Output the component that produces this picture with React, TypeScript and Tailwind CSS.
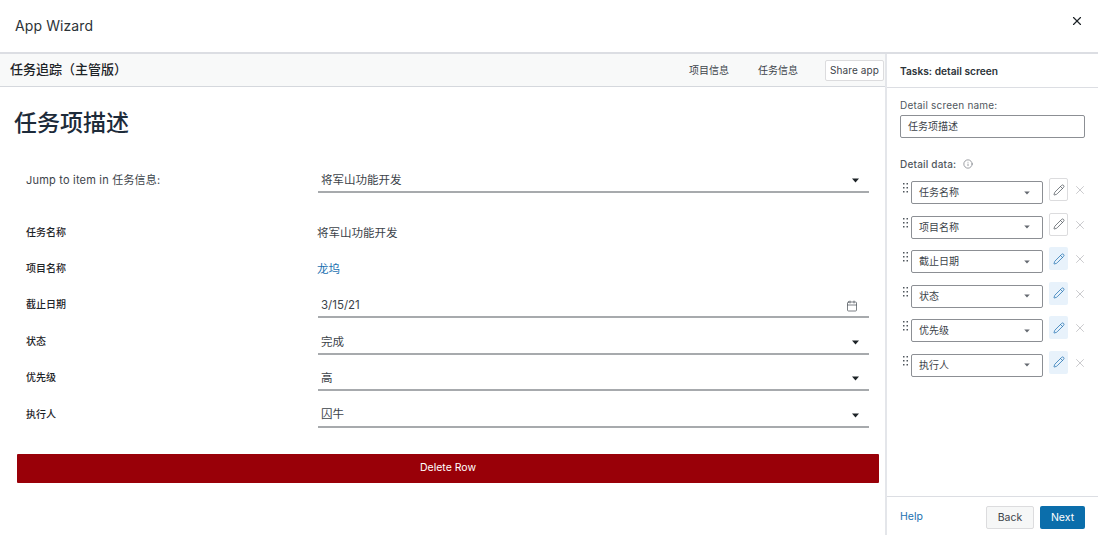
import { Pencil, X, Info, Calendar } from 'lucide-react'

const font = '"Inter", "Noto Sans CJK SC", sans-serif'

const fields = [
  { label: '任务名称', kind: 'text', value: '将军山功能开发' },
  { label: '项目名称', kind: 'link', value: '龙坞' },
  { label: '截止日期', kind: 'date', value: '3/15/21' },
  { label: '状态', kind: 'select', value: '完成' },
  { label: '优先级', kind: 'select', value: '高' },
  { label: '执行人', kind: 'select', value: '囚牛' },
]

const detailRows = [
  { name: '任务名称', active: false },
  { name: '项目名称', active: false },
  { name: '截止日期', active: true },
  { name: '状态', active: true },
  { name: '优先级', active: true },
  { name: '执行人', active: true },
]

function Caret(props: { className?: string; small?: boolean }) {
  return (
    <svg width={props.small ? 6 : 7} height={props.small ? 4 : 5} viewBox="0 0 7 5" className={props.className}>
      <path d="M0 0.5h7L3.5 4.5z" fill="currentColor" />
    </svg>
  )
}

function Grip() {
  return (
    <svg width="5" height="10" viewBox="0 0 5 10" className="text-[#50575e] mt-[5px] ml-[3px]">
      <g fill="currentColor">
        <rect x="0" y="0" width="1.5" height="1.5" />
        <rect x="3.5" y="0" width="1.5" height="1.5" />
        <rect x="0" y="4" width="1.5" height="1.5" />
        <rect x="3.5" y="4" width="1.5" height="1.5" />
        <rect x="0" y="8" width="1.5" height="1.5" />
        <rect x="3.5" y="8" width="1.5" height="1.5" />
      </g>
    </svg>
  )
}

function FlatField(props: { value: string; date?: boolean }) {
  return (
    <div className="w-[551px] h-[25px] border-b-2 border-[#a7aaad] flex items-center justify-between pt-[2px] pl-[3px] pr-[10px] text-[11.5px] text-[#3c434a]">
      <span>{props.value}</span>
      {props.date ? (
        <Calendar size={12} strokeWidth={1.5} className="text-[#50575e] mr-[1px]" />
      ) : (
        <Caret className="text-[#1d2327]" />
      )}
    </div>
  )
}

function FieldRow(props: { label: string; kind: string; value: string }) {
  return (
    <div className="h-[36.4px] flex">
      <div className="w-[292px] pt-[4px] text-[10px] font-medium text-[#1d2327]">{props.label}</div>
      <div className="flex-1">
        {props.kind === 'text' && <div className="-ml-[1px] pt-[4px] text-[11.5px] text-[#3c434a]">{props.value}</div>}
        {props.kind === 'link' && <div className="-ml-[1px] pt-[4px] text-[11.5px] text-[#2271b1]">{props.value}</div>}
        {props.kind === 'date' && <FlatField value={props.value} date />}
        {props.kind === 'select' && <FlatField value={props.value} />}
      </div>
    </div>
  )
}

function DetailRow(props: { name: string; active: boolean }) {
  return (
    <div className="h-[34.5px] flex items-start">
      <div className="w-[11px] shrink-0"><Grip /></div>
      <div className="w-[132px] h-[23px] mt-[3px] border border-[#8c8f94] rounded-[2px] flex items-center justify-between pl-[7px] pr-[12px] text-[10px] text-[#3c434a]">
        <span>{props.name}</span>
        <Caret small className="text-[#646970]" />
      </div>
      <button
        className={
          props.active
            ? 'ml-[6px] w-[19px] h-[23px] rounded-[2px] bg-[#e8f2fb] flex items-center justify-center text-[#2271b1]'
            : 'ml-[6px] w-[19px] h-[23px] rounded-[2px] border border-[#dcdcde] bg-white flex items-center justify-center text-[#50575e]'
        }
      >
        <Pencil size={12} strokeWidth={1.5} />
      </button>
      <X size={14} strokeWidth={1.5} className="ml-[5px] mt-[5px] text-[#c3c4c7]" />
    </div>
  )
}

export default function App() {
  return (
    <div className="w-[1098px] h-[535px] bg-white flex flex-col overflow-hidden" style={{ fontFamily: font }}>
      {/* Wizard title */}
      <div className="h-[54px] shrink-0 border-b-2 border-[#dcdee3] flex items-start justify-between pl-[15px] pr-[14px]">
        <div className="pt-[16px] text-[14px] leading-[20px] tracking-[0.1px] text-[#2c3338]">App Wizard</div>
        <X size={14} strokeWidth={2} className="mt-[14px] text-[#1d2327]" />
      </div>

      <div className="flex-1 flex min-h-0">
        {/* Preview area */}
        <div className="w-[885px] shrink-0 flex flex-col">
          <div className="h-[33px] shrink-0 bg-[#f8f9f9] border-b border-[#d5d8dd] flex items-center justify-between pl-[10px]">
            <div className="text-[13px] font-medium text-[#1d2327]">任务追踪（主管版）</div>
            <div className="flex items-center text-[10px] text-[#3c434a]">
              <span className="mr-[29px]">项目信息</span>
              <span className="mr-[27px]">任务信息</span>
              <button className="w-[59px] h-[21px] mr-[1px] border border-[#dcdcde] bg-white rounded-[2px] text-[10px] text-[#3c434a] tracking-[0.1px] whitespace-nowrap">
                Share app
              </button>
            </div>
          </div>

          <div className="pl-[14px] pt-[21px] text-[23px] leading-[30px] font-medium text-[#1d2b3a]">任务项描述</div>

          <div className="flex h-[25px] mt-[30px] pl-[26px] items-center">
            <div className="w-[292px] text-[11px] tracking-[0.2px] text-[#3c434a]">Jump to item in 任务信息:</div>
            <FlatField value="将军山功能开发" />
          </div>

          <div className="pl-[26px] mt-[27.6px]">
            {fields.map((f) => (
              <FieldRow key={f.label} label={f.label} kind={f.kind} value={f.value} />
            ))}
          </div>

          <div className="px-[17px] pr-[6px] mt-[14.4px]">
            <button className="w-full h-[29px] bg-[#990008] rounded-[1px] text-[10.5px] text-white">Delete Row</button>
          </div>
        </div>

        {/* Settings sidebar */}
        <div className="flex-1 border-l-2 border-[#e4e6ea] flex flex-col">
          <div className="h-[34px] shrink-0 border-b border-[#dcdee3] flex items-center pl-[13px] pt-[2px] text-[10.2px] font-semibold text-[#2c3338]">
            Tasks: detail screen
          </div>
          <div className="flex-1 pl-[13px] pr-[13px]">
            <div className="pt-[10px] text-[10px] leading-[14px] text-[#50575e] tracking-[0.2px]">Detail screen name:</div>
            <div className="mt-[3px] w-[185px] h-[23px] border border-[#8c8f94] rounded-[2px] flex items-center pl-[7px] text-[10px] text-[#3c434a]">
              任务项描述
            </div>
            <div className="mt-[19px] flex items-center text-[10px] leading-[14px] font-medium text-[#50575e] tracking-[0.2px]">
              Detail data:
              <Info size={10} strokeWidth={1.5} className="ml-[7px] text-[#646970]" />
            </div>
            <div className="mt-[7px]">
              {detailRows.map((r) => (
                <DetailRow key={r.name} name={r.name} active={r.active} />
              ))}
            </div>
          </div>
          <div className="h-[39px] shrink-0 border-t border-[#dcdee3] flex items-center justify-between pl-[13px] pr-[15px] pt-[2px]">
            <span className="mb-[1px] text-[10.5px] text-[#2271b1]">Help</span>
            <div className="flex gap-[6px]">
              <button className="w-[48px] h-[23px] pt-[1px] border border-[#dcdcde] bg-[#f6f7f7] rounded-[2px] text-[10.5px] text-[#3c434a]">Back</button>
              <button className="w-[45px] h-[23px] pt-[1px] bg-[#0b6eab] rounded-[2px] text-[10.5px] text-white">Next</button>
            </div>
          </div>
        </div>
      </div>
    </div>
  )
}
